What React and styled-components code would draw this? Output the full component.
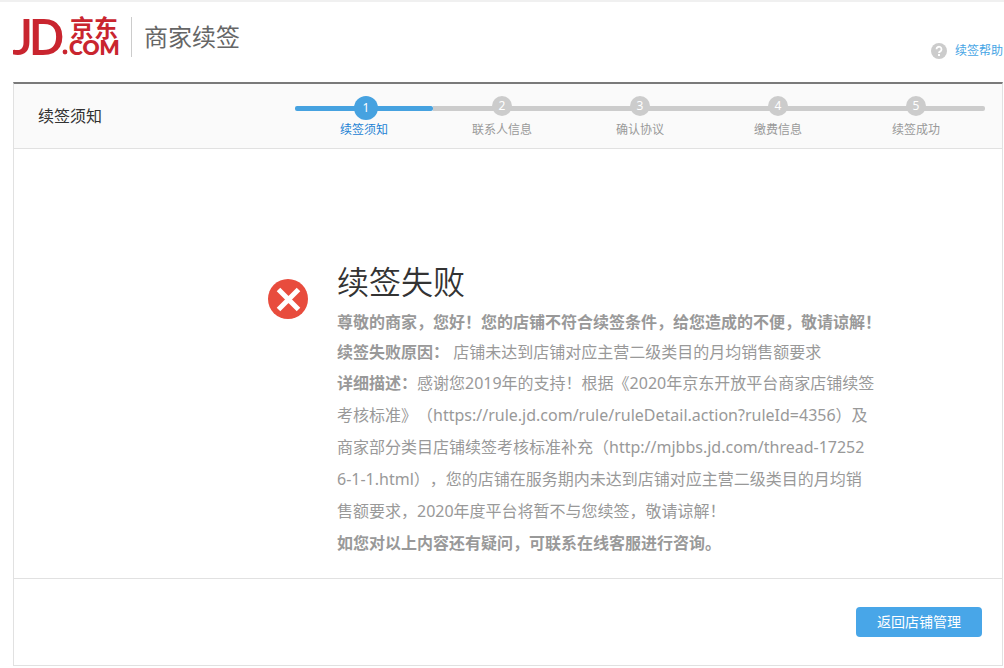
import React from 'react';
import styled, { createGlobalStyle, css } from 'styled-components';

const GlobalStyle = createGlobalStyle`
  * {
    box-sizing: border-box;
  }

  body {
    margin: 0;
    background: #fff;
    color: #333;
    font-family: 'Noto Sans', 'Noto Sans CJK SC', sans-serif;
    font-size: 12px;
    text-spacing-trim: space-all;
  }

  h1, h2, h3, p, ol {
    margin: 0;
    padding: 0;
    font-weight: 400;
  }
`;

const Page = styled.div`
  border-top: 2px solid #f0f0f0;
  padding: 0 1px 0 13px;
`;

const Header = styled.header`
  display: flex;
  align-items: flex-start;
  justify-content: space-between;
  height: 80px;
  padding-top: 15px;
`;

const Brand = styled.div`
  display: flex;
  align-items: center;
  height: 40px;
`;

const LogoLink = styled.a`
  display: flex;
`;

const SiteName = styled.h1`
  height: 40px;
  margin-left: 10px;
  padding-left: 12px;
  border-left: 1px solid #ccc;
  color: #666;
  font-size: 24px;
  line-height: 40px;
`;

const HelpLink = styled.a`
  display: flex;
  align-items: center;
  gap: 8px;
  margin-top: 26px;
  color: #46a5e5;
  line-height: 16px;
  text-decoration: none;
`;

const Panel = styled.main`
  border: 1px solid #e1e1e1;
  border-top: 2px solid #7a7a7a;
`;

const PanelHeader = styled.div`
  display: flex;
  align-items: center;
  justify-content: space-between;
  height: 65px;
  padding: 0 17px 0 24px;
  border-bottom: 1px solid #e1e1e1;
  background: #fafafa;
`;

const PanelTitle = styled.h2`
  font-size: 16px;
  line-height: 24px;
`;

const StepList = styled.ol`
  display: flex;
  flex: 0 1 690px;
  align-self: flex-start;
  padding-top: 12px;
  list-style: none;
`;

const Step = styled.li`
  flex: 1;
  color: #999;
  text-align: center;

  ${({ $active }) => $active && css`
    color: #1c82d4;
  `}
`;

const StepTrack = styled.div`
  height: 26px;
  padding-top: 10px;
`;

const StepBar = styled.div`
  position: relative;
  height: 5px;
  background: #ccc;

  ${Step}:last-child & {
    border-radius: 0 2px 2px 0;
  }

  ${({ $active }) => $active && css`
    border-radius: 2px;
    background: #46a2e0;
  `}
`;

/* Sits on top of the bar */
const StepNumber = styled.span`
  position: absolute;
  top: -10px;
  left: 50%;
  width: 20px;
  height: 20px;
  margin-left: -10px;
  border-radius: 50%;
  background: #ccc;
  color: #fff;
  font-size: 12px;
  line-height: 20px;

  ${({ $active }) => $active && css`
    width: 24px;
    height: 24px;
    background: #46a2e0;
    line-height: 24px;
  `}
`;

const StepLabel = styled.div`
  line-height: 16px;
`;

const Result = styled.section`
  display: flex;
  align-items: flex-start;
  gap: 29px;
  padding: 110px 24px 19px 254px;
`;

const ResultIcon = styled.svg`
  flex: none;
  width: 40px;
  height: 40px;
  margin-top: 20px;
`;

const ResultBody = styled.div`
  min-width: 540px;
  color: #999;
  font-size: 16px;

  strong {
    font-weight: 700;
  }
`;

const ResultTitle = styled.h3`
  margin-bottom: 2px;
  color: #333;
  font-size: 32px;
  font-weight: 350;
  line-height: 46px;
`;

const Line = styled.p`
  line-height: 30px;
`;

const Detail = styled.p`
  line-height: 32px;
`;

const PanelFooter = styled.div`
  display: flex;
  justify-content: flex-end;
  padding: 28px 20px;
  border-top: 1px solid #e1e1e1;
`;

const PrimaryButton = styled.button`
  min-width: 126px;
  height: 30px;
  padding: 0 20px 2px;
  border: 0;
  border-radius: 4px;
  background: #48a6e8;
  color: #fff;
  font-family: inherit;
  font-size: 14px;
  cursor: pointer;

  &:hover {
    background: #3a98d8;
  }
`;

const steps = ['续签须知', '联系人信息', '确认协议', '缴费信息', '续签成功'];

const Logo = () => (
  <svg width="108" height="76" viewBox="0 -18 108 76" fill="#c9252f" role="img" aria-label="JD.COM 京东">
    <text x="-1" y="38" fontFamily="Lato" fontSize="50" fontWeight="600">J</text>
    <text x="15" y="38" fontFamily="Open Sans" fontSize="51" fontWeight="600">D</text>
    <circle cx="52" cy="35" r="2.4" />
    <text x="57" y="20" fontFamily="Noto Sans CJK SC" fontSize="24" fontWeight="700">京东</text>
    <text x="56" y="38" fontFamily="Lato" fontSize="21" fontWeight="800">COM</text>
  </svg>
);

const HelpIcon = () => (
  <svg width="16" height="16" viewBox="0 0 16 16" aria-hidden="true">
    <circle cx="8" cy="8" r="8" fill="#ccc" />
    <path d="M5.5 6.3a2.5 2.5 0 1 1 3.8 2.1c-.9.5-1.3.8-1.3 1.7" fill="none" stroke="#fff" strokeWidth="1.8" />
    <rect x="7" y="11" width="2" height="2" fill="#fff" />
  </svg>
);

const App = () => {
  return (
    <>
      <GlobalStyle />
      <Page>
        <Header>
          <Brand>
            <LogoLink href="#">
              <Logo />
            </LogoLink>
            <SiteName>商家续签</SiteName>
          </Brand>
          <HelpLink href="#help">
            <HelpIcon />
            续签帮助
          </HelpLink>
        </Header>
        <Panel>
          <PanelHeader>
            <PanelTitle>续签须知</PanelTitle>
            <StepList>
              {steps.map((label, i) => (
                <Step key={label} $active={i === 0}>
                  <StepTrack>
                    <StepBar $active={i === 0}>
                      <StepNumber $active={i === 0}>{i + 1}</StepNumber>
                    </StepBar>
                  </StepTrack>
                  <StepLabel>{label}</StepLabel>
                </Step>
              ))}
            </StepList>
          </PanelHeader>
          <Result>
            <ResultIcon viewBox="0 0 40 40" aria-hidden="true">
              <circle cx="20" cy="20" r="20" fill="#e84c3d" />
              <path d="M10.5 10.5l20 20M30.5 10.5l-20 20" stroke="#fff" strokeWidth="5" />
            </ResultIcon>
            <ResultBody>
              <ResultTitle>续签失败</ResultTitle>
              <Line>
                <strong>尊敬的商家，您好！您的店铺不符合续签条件，给您造成的不便，敬请谅解！</strong>
              </Line>
              <Line>
                <strong>续签失败原因：</strong> 店铺未达到店铺对应主营二级类目的月均销售额要求
              </Line>
              <Detail>
                <strong>详细描述：</strong>感谢您2019年的支持！根据《2020年京东开放平台商家店铺续签
                <br />
                考核标准》（https://rule.jd.com/rule/ruleDetail.action?ruleId=4356）及
                <br />
                商家部分类目店铺续签考核标准补充（http://mjbbs.jd.com/thread-17252
                <br />
                6-1-1.html），您的店铺在服务期内未达到店铺对应主营二级类目的月均销
                <br />
                售额要求，2020年度平台将暂不与您续签，敬请谅解！
              </Detail>
              <Detail>
                <strong>如您对以上内容还有疑问，可联系在线客服进行咨询。</strong>
              </Detail>
            </ResultBody>
          </Result>
          <PanelFooter>
            <PrimaryButton type="button">返回店铺管理</PrimaryButton>
          </PanelFooter>
        </Panel>
      </Page>
    </>
  );
};

export default App;
